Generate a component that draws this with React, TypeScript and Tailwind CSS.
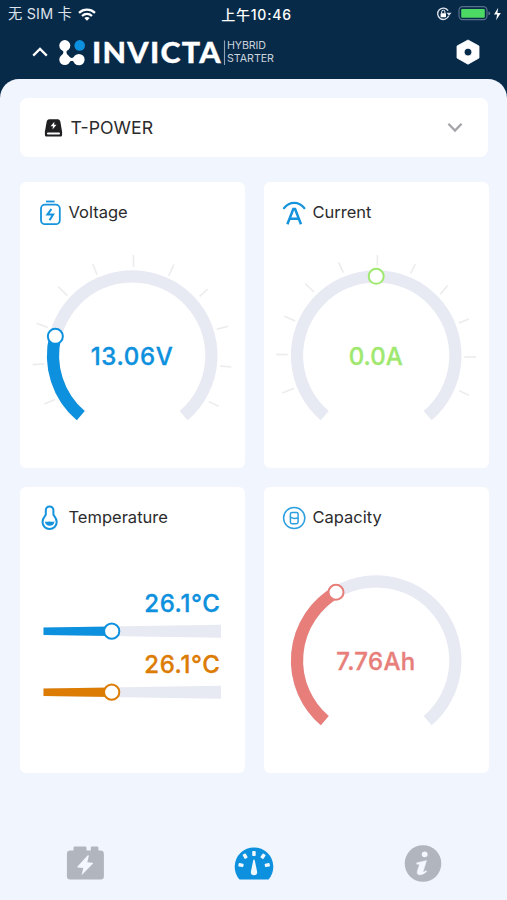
import React from "react";

interface Tick {
  x1: number;
  y1: number;
  x2: number;
  y2: number;
}

interface GaugeProps {
  value: string;
  color: string;
  textLength: number;
  // knob angle in degrees, 0 is the top and negative is to the left
  angle: number;
  ticks?: Tick[];
  filled?: boolean;
}

interface CardProps {
  title: string;
  icon: React.ReactNode;
  children: React.ReactNode;
}

interface TemperatureBarProps {
  value: string;
  color: string;
}

const CX = 112.2;
const CY = 109.5;
const RADIUS = 79.2;
const END = 139.5;

const point = (angle: number) => {
  const rad = (angle * Math.PI) / 180;
  return { x: CX + RADIUS * Math.sin(rad), y: CY - RADIUS * Math.cos(rad) };
};

const arc = (from: number, to: number) => {
  const a = point(from);
  const b = point(to);
  const large = to - from > 180 ? 1 : 0;
  return `M${a.x} ${a.y}A${RADIUS} ${RADIUS} 0 ${large} 1 ${b.x} ${b.y}`;
};

const voltageTicks: Tick[] = [
  { x1: 24.3, y1: 158, x2: 35, y2: 153.6 },
  { x1: 12.7, y1: 118.6, x2: 24.3, y2: 118 },
  { x1: 16.7, y1: 77.3, x2: 27.7, y2: 81.6 },
  { x1: 38.3, y1: 40.6, x2: 47.3, y2: 49.6 },
  { x1: 72.7, y1: 18, x2: 77, y2: 28.6 },
  { x1: 113.4, y1: 9, x2: 113.6, y2: 21 },
  { x1: 154, y1: 18.3, x2: 148.7, y2: 30 },
  { x1: 187.7, y1: 43, x2: 179.7, y2: 50.3 },
  { x1: 208, y1: 80.3, x2: 196.7, y2: 83.3 },
  { x1: 211.4, y1: 121, x2: 200, y2: 120 },
  { x1: 198.7, y1: 160.3, x2: 188.7, y2: 155.6 },
];

const currentTicks: Tick[] = [
  { x1: 18.3, y1: 147, x2: 30, y2: 142.3 },
  { x1: 12.3, y1: 108.5, x2: 23.7, y2: 108.5 },
  { x1: 20.3, y1: 70.3, x2: 31.3, y2: 75 },
  { x1: 41.3, y1: 37.6, x2: 50, y2: 46 },
  { x1: 74.7, y1: 16.3, x2: 79.3, y2: 26.6 },
  { x1: 113.5, y1: 9, x2: 113.3, y2: 19.6 },
  { x1: 151.3, y1: 18, x2: 146.7, y2: 27.6 },
  { x1: 183.7, y1: 39.6, x2: 176.3, y2: 48.3 },
  { x1: 205, y1: 73, x2: 194.7, y2: 77 },
  { x1: 212, y1: 111, x2: 200.3, y2: 111 },
  { x1: 205, y1: 149.3, x2: 195, y2: 144.6 },
];

const Gauge: React.FC<GaugeProps> = ({ value, color, textLength, angle, ticks = [], filled = true }) => {
  const knob = point(angle);
  return (
    <svg width="225" height="190" viewBox="0 0 225 190" fill="none">
      {ticks.map((t, i) => (
        <line key={i} x1={t.x1} y1={t.y1} x2={t.x2} y2={t.y2} stroke="#ececee" strokeWidth="1.6" />
      ))}
      <path d={arc(-END, END)} stroke="#e7e9f3" strokeWidth="12.2" />
      {filled && <path d={arc(-END, angle)} stroke={color} strokeWidth="12.2" />}
      <circle cx={knob.x} cy={knob.y} r="7.5" fill="#fff" stroke={color} strokeWidth="2" />
      <text
        x={CX - 0.5}
        y="118.6"
        textAnchor="middle"
        textLength={textLength}
        fill={color}
        stroke={color}
        strokeWidth=".35"
        className="text-[24px] font-medium"
      >
        {value}
      </text>
    </svg>
  );
};

const TemperatureBar: React.FC<TemperatureBarProps> = ({ value, color }) => (
  <svg width="225" height="61" viewBox="0 0 225 61" fill="none">
    <text
      x="199.8"
      y="26"
      textAnchor="end"
      textLength="75.5"
      fill={color}
      stroke={color}
      strokeWidth=".35"
      className="text-[24px] font-medium"
    >
      {value}
    </text>
    <path d="M23.5 41.4L201 38.8V51.8L23.5 49Z" fill="#e7e9f3" />
    <path d="M23.5 41.4L92 40.4V50.1L23.5 49Z" fill={color} />
    <circle cx="91.7" cy="45.2" r="7.6" fill="#fff" stroke={color} strokeWidth="2" />
  </svg>
);

const Card: React.FC<CardProps> = ({ title, icon, children }) => (
  <div className="h-[286px] rounded-md bg-white">
    <div className="flex h-[61px] items-center gap-[7px] pl-[18px]">
      <div className="flex w-6 justify-center">{icon}</div>
      <h2 className="text-[16.5px] text-[#2b2b2d]">{title}</h2>
    </div>
    <div className="pt-[3px]">{children}</div>
  </div>
);

const VoltageIcon = () => (
  <svg width="24" height="26" viewBox="0 0 24 26" fill="none" stroke="#1593dc" strokeWidth="1.8">
    <path d="M8 1.5h8.6" />
    <rect x="3" y="4.6" width="18.8" height="19.6" rx="4" />
    <path d="M13.4 9l-4 5.6h5.7l-3.6 5.6" strokeWidth="2" />
  </svg>
);

const CurrentIcon = () => (
  <svg width="24" height="24" viewBox="0 0 24 24" fill="none" stroke="#1593dc" strokeWidth="2.2">
    <path d="M2 7.2C7.5.2 16.8.2 22.4 7.2" strokeLinecap="round" />
    <path d="M5.4 23.2L11.3 8h1.8L19 23.2M7.6 17.8h9.2" strokeWidth="2.5" />
  </svg>
);

const TemperatureIcon = () => (
  <svg width="24" height="26" viewBox="0 0 24 26" fill="none">
    <path
      d="M7.8 5.2a3.8 3.8 0 0 1 7.6 0V9.4c0 1.3 3.3 3.3 3.3 7.5a7.1 7.1 0 0 1-14.2 0c0-4.2 3.3-6.2 3.3-7.5Z"
      stroke="#1593dc"
      strokeWidth="2"
    />
    <path d="M6.8 16.5c2.2.9 3.3-.5 5.2 0 1.5.4 2.9.3 4.5-.1a4.9 4.9 0 0 1-9.7.1Z" fill="#1593dc" />
  </svg>
);

const CapacityIcon = () => (
  <svg width="24" height="24" viewBox="0 0 24 24" fill="none" stroke="#2c9fe0" strokeWidth="1.5">
    <circle cx="12.2" cy="12" r="10.6" />
    <rect x="8.4" y="6.4" width="7.7" height="11.3" rx="1.6" />
    <path d="M8.4 11.3l3.8 1.3 3.9-.7" />
  </svg>
);

const StatusBar = () => (
  <div className="flex h-7 items-center justify-between pl-2 pr-[6px] text-[14px] text-white">
    <div className="flex w-[160px] items-center gap-[6px]">
      <span className="whitespace-nowrap text-[14.3px] tracking-[0.2px] text-[#dde3ea]">无 SIM 卡</span>
      <svg width="18" height="13" viewBox="0 0 18 13" fill="none" stroke="#fff" strokeWidth="2.3">
        <path d="M1 4.8C5.6.6 12.4.6 17 4.8" />
        <path d="M4 8c3-2.7 7-2.7 10 0" />
        <path d="M6.3 10.1c1.7-1.4 3.7-1.4 5.4 0L9 12.8Z" fill="#fff" stroke="none" />
      </svg>
    </div>
    <span className="ml-1 whitespace-nowrap font-medium tracking-[0.8px]">上午10:46</span>
    <svg width="160" height="18" viewBox="0 0 160 18" fill="none">
      <path d="M107.1 5.6A5.7 5.7 0 1 0 107.7 10.8" stroke="#dfe5ec" strokeWidth="1.3" />
      <path d="M105.5 7.8h5l-2.4 3Z" fill="#dfe5ec" />
      <rect x="99.6" y="8.2" width="5.4" height="4" rx=".4" fill="#fff" />
      <path d="M100.7 8.4V6.8a1.6 1.6 0 0 1 3.2 0v1.6" stroke="#fff" strokeWidth="1" />
      <rect x="118" y="1.7" width="28" height="13" rx="3.6" stroke="#56708a" strokeWidth="1.2" />
      <rect x="120.2" y="3.9" width="23.6" height="8.8" rx="1" fill="#4cd964" />
      <path d="M147.4 6.4c1.3.4 1.9 1 1.9 1.9s-.6 1.6-1.9 2Z" fill="#56708a" />
      <path d="M157.2 2.7L153 9.5h3.1l-1 5.7 4.7-7.3h-3.4Z" fill="#fff" />
    </svg>
  </div>
);

const Header = () => (
  <header className="flex h-[51px] items-center justify-between pb-[3px] pl-8 pr-[26px]">
    <div className="flex items-center">
      <svg width="16" height="10" viewBox="0 0 16 10" fill="none" stroke="#fff" strokeWidth="2.2">
        <path d="M1.2 8.6L8 1.9l6.8 6.7" />
      </svg>
      <svg className="ml-[11px]" width="27" height="27" viewBox="0 0 27 27" fill="#fff">
        <circle cx="5.8" cy="6.6" r="5.5" />
        <circle cx="20.7" cy="6.4" r="5.3" fill="#0d90dd" />
        <circle cx="5.8" cy="20.6" r="5.5" />
        <circle cx="19.9" cy="20.6" r="5.7" />
        <path d="M2.5 10C5 12.5 5 14 2.5 16.8h6.7C6.9 14 6.9 12.5 9 10Z" />
        <path d="M9 16.8c2.7 2.8 5 2.8 7.5 0v7.2c-2.5-2.6-4.8-2.6-7.5 0Z" />
      </svg>
      <svg width="192" height="40" viewBox="0 0 192 40" fill="#fff">
        <text
          x="6"
          y="31.4"
          textLength="130"
          lengthAdjust="spacingAndGlyphs"
          stroke="#fff"
          strokeWidth=".3"
          className="font-['Lato'] text-[28.8px] font-black tracking-[1.2px]"
        >
          INVICTA
        </text>
        <path d="M138.5 8.5V33" stroke="#91a3b5" strokeWidth="1.1" />
        <text x="141" y="17.3" textLength="39" fill="#cbd4dd" className="text-[10.7px]">
          HYBRID
        </text>
        <text x="141" y="30.2" textLength="47" fill="#cbd4dd" className="text-[10.7px]">
          STARTER
        </text>
      </svg>
    </div>
    <svg width="26" height="28" viewBox="0 0 26 28">
      <path
        d="M13 2L24 8v12L13 26.2 2 20V8Z M13 10.2a3.9 3.9 0 1 0 .01 0Z"
        fill="#fff"
        fillRule="evenodd"
        stroke="#fff"
        strokeWidth=".8"
        strokeLinejoin="round"
      />
    </svg>
  </header>
);

const DeviceSelect = () => (
  <div className="flex h-[59px] items-center rounded-lg bg-white pl-6 pr-[25px]">
    <svg width="19" height="20" viewBox="0 0 19 20" fill="#1f1f21">
      <path d="M5.3 1.2h8.4c1.5 0 2.3 1 2.6 2.3l1.8 10.3v2.9c0 1.2-.7 1.9-1.8 1.9H2.7c-1.1 0-1.8-.7-1.8-1.9v-2.9L2.7 3.5c.3-1.3 1.1-2.3 2.6-2.3Z" />
      <path d="M10.4 3.8L6.6 8.3h2.4l-.5 3.2 4-4.7h-2.4Z" fill="#fff" />
      <rect x="3" y="14.5" width="13" height="2" rx=".9" fill="#fff" />
    </svg>
    <span className="ml-2 grow pt-px text-[17.7px] text-[#2b2b2d]">T-POWER</span>
    <svg width="16" height="11" viewBox="0 0 16 11" fill="none" stroke="#a3a4a8" strokeWidth="2.2">
      <path d="M1.4 1.8L8 8.6l6.6-6.8" />
    </svg>
  </div>
);

const BottomNav = () => (
  <nav className="flex items-start justify-between pl-[66px] pr-[65px]">
    <svg width="38" height="36" viewBox="0 0 38 36" fill="#b1b5be">
      <path d="M7.5 5.5V3c0-1 .5-1.5 1.5-1.5h10c1 0 1.5.5 1.5 1.5v2.5h4.3V3c0-1 .4-1.5 1.3-1.5H31c.9 0 1.4.5 1.4 1.5v2.5h2c2.3 0 3.5 1.2 3.5 3.4v22.4c0 2.1-1.1 3.2-3.2 3.2H4.1C2 34.5.9 33.4.9 31.3V8.9C.9 6.7 2.1 5.5 4.3 5.5Z" />
      <path
        d="M21.8 10.2L11.5 21.4c-.5.6-.3 1 .5 1.1l5.3.5-1.7 7.2 11.2-11.4c.5-.6.3-1-.5-1.1l-5-.5 1.6-6.6Z"
        fill="#f4f7ff"
      />
    </svg>
    <svg width="40" height="36" viewBox="0 0 40 36">
      <path d="M5.5 34.5A19.3 19.3 0 1 1 34.5 34.5Z" fill="#0d90dd" />
      <g fill="#f0f8ff">
        <rect x="18.2" y="6" width="3.5" height="5" rx=".8" />
        <rect x="9.4" y="8.7" width="3.5" height="5" rx=".8" transform="rotate(-30 11.1 11.2)" />
        <rect x="27.3" y="8.7" width="3.5" height="5" rx=".8" transform="rotate(35 29 11.2)" />
        <rect x="4.5" y="18.3" width="5" height="3.5" rx=".8" transform="rotate(12 7 20)" />
        <rect x="30.8" y="18.3" width="5" height="3.5" rx=".8" transform="rotate(-12 33.3 20)" />
        <path d="M20 14.5c.5 0 .7.3.8 1l2.4 11.5a3.2 3.2 0 1 1-6.4 0l2.4-11.5c.1-.7.3-1 .8-1Z" />
      </g>
    </svg>
    <svg width="38" height="38" viewBox="0 0 38 38">
      <circle cx="19" cy="18.5" r="18.3" fill="#b1b5be" />
      <circle cx="20.7" cy="9.3" r="2.9" fill="#f4f7ff" />
      <path
        d="M12.8 17.7c3-.3 5.8-1.2 9.7-2.2l-3.3 10.8c-.4 1.2.5 1.1 2.8-.7l.7.9c-2.8 2.7-5.6 3.7-7.7 3.2-1.8-.4-2.2-1.8-1.5-4l1.9-5.8c.2-.7-.7-.8-2.6-.7Z"
        fill="#f4f7ff"
        stroke="#f4f7ff"
        strokeWidth=".5"
      />
    </svg>
  </nav>
);

const App = () => (
  <div className="flex h-[900px] w-[507px] flex-col bg-[#082a49] font-['Inter','Noto_Sans_CJK_SC',sans-serif]">
    <StatusBar />
    <Header />
    <main className="flex grow flex-col rounded-t-[19px] bg-[#f1f5fe]">
      <div className="grow px-[19.5px] pt-[19px]">
        <DeviceSelect />
        <div className="mt-[25px] grid grid-cols-[225px_225px] gap-x-[19px] gap-y-[19px]">
          <Card title="Voltage" icon={<VoltageIcon />}>
            <Gauge value="13.06V" color="#0d90dd" textLength={82} angle={-76} ticks={voltageTicks} />
          </Card>
          <Card title="Current" icon={<CurrentIcon />}>
            <Gauge value="0.0A" color="#9fe870" textLength={54} angle={0} ticks={currentTicks} filled={false} />
          </Card>
          <Card title="Temperature" icon={<TemperatureIcon />}>
            <div className="flex flex-col pt-[35px]">
              <TemperatureBar value="26.1°C" color="#0d90dd" />
              <TemperatureBar value="26.1°C" color="#dc7c04" />
            </div>
          </Card>
          <Card title="Capacity" icon={<CapacityIcon />}>
            <Gauge value="7.76Ah" color="#e77e7a" textLength={79} angle={-30.5} />
          </Card>
        </div>
      </div>
      <div className="h-[55px]">
        <BottomNav />
      </div>
    </main>
  </div>
);

export default App;
